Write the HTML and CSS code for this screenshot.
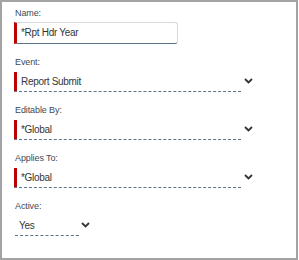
FILE: index.html
```html
<!DOCTYPE html>
<html lang="en">
<head>
    <meta charset="UTF-8">
    <meta name="viewport" content="width=device-width, initial-scale=1.0">
    <title>Report Header Field</title>
    <link rel="stylesheet" href="styles.css">
</head>
<body>
    <div class="panel">
        <div class="field">
            <label class="field-label">Name:</label>
            <div class="text-input required">*Rpt Hdr Year</div>
        </div>
        <div class="field">
            <label class="field-label">Event:</label>
            <div class="select-row">
                <div class="select wide required">Report Submit</div>
                <svg class="chevron" width="9" height="6" viewBox="0 0 9 6"><polyline points="1,1 4.5,4.5 8,1" /></svg>
            </div>
        </div>
        <div class="field">
            <label class="field-label">Editable By:</label>
            <div class="select-row">
                <div class="select wide required">*Global</div>
                <svg class="chevron" width="9" height="6" viewBox="0 0 9 6"><polyline points="1,1 4.5,4.5 8,1" /></svg>
            </div>
        </div>
        <div class="field">
            <label class="field-label">Applies To:</label>
            <div class="select-row">
                <div class="select wide required">*Global</div>
                <svg class="chevron" width="9" height="6" viewBox="0 0 9 6"><polyline points="1,1 4.5,4.5 8,1" /></svg>
            </div>
        </div>
        <div class="field">
            <label class="field-label">Active:</label>
            <div class="select-row">
                <div class="select narrow">Yes</div>
                <svg class="chevron" width="9" height="6" viewBox="0 0 9 6"><polyline points="1,1 4.5,4.5 8,1" /></svg>
            </div>
        </div>
    </div>
</body>
</html>
```

FILE: styles.css
```css
body {
    font-family: "Liberation Sans", Arial, sans-serif;
    margin: 0;
    padding: 0;
    background: white;
    color: #32363a;
}
.panel {
    box-sizing: border-box;
    width: 298px;
    height: 260px;
    border: 2px solid #a3a3a3;
    padding: 5px 12px 0 12px;
}
.field {
    margin-bottom: 12px;
}
.field-label {
    display: block;
    font-size: 9px;
    line-height: 12px;
    height: 12px;
    margin: 0 0 3px 1px;
    letter-spacing: -0.1px;
    color: #3f4a56;
}
.text-input {
    box-sizing: border-box;
    width: 164px;
    height: 22px;
    border: 1px solid #d5dadd;
    border-bottom-color: #5b738b;
    border-radius: 0 3px 3px 0;
    padding-left: 4px;
    font-size: 10px;
    line-height: 20px;
    letter-spacing: -0.3px;
}
.text-input.required {
    border-left: 3px solid #bb0000;
}
.select-row {
    display: flex;
    align-items: flex-start;
}
.select {
    box-sizing: border-box;
    height: 21px;
    padding-top: 1px;
    border-bottom: 1px dashed #5b738b;
    font-size: 10px;
    line-height: 19px;
    letter-spacing: -0.3px;
}
.select.required {
    position: relative;
    padding-left: 7px;
}
.select.required::before {
    content: "";
    position: absolute;
    left: 0;
    top: 1px;
    width: 3px;
    height: 19px;
    background: #bb0000;
}
.select.wide {
    width: 227px;
}
.select.narrow {
    width: 64px;
    margin-left: 1px;
    padding-left: 4px;
}
.chevron {
    margin: 7px 0 0 3px;
    fill: none;
    stroke: #32363a;
    stroke-width: 1.8;
}
.narrow + .chevron {
    margin-left: 2px;
}
```
